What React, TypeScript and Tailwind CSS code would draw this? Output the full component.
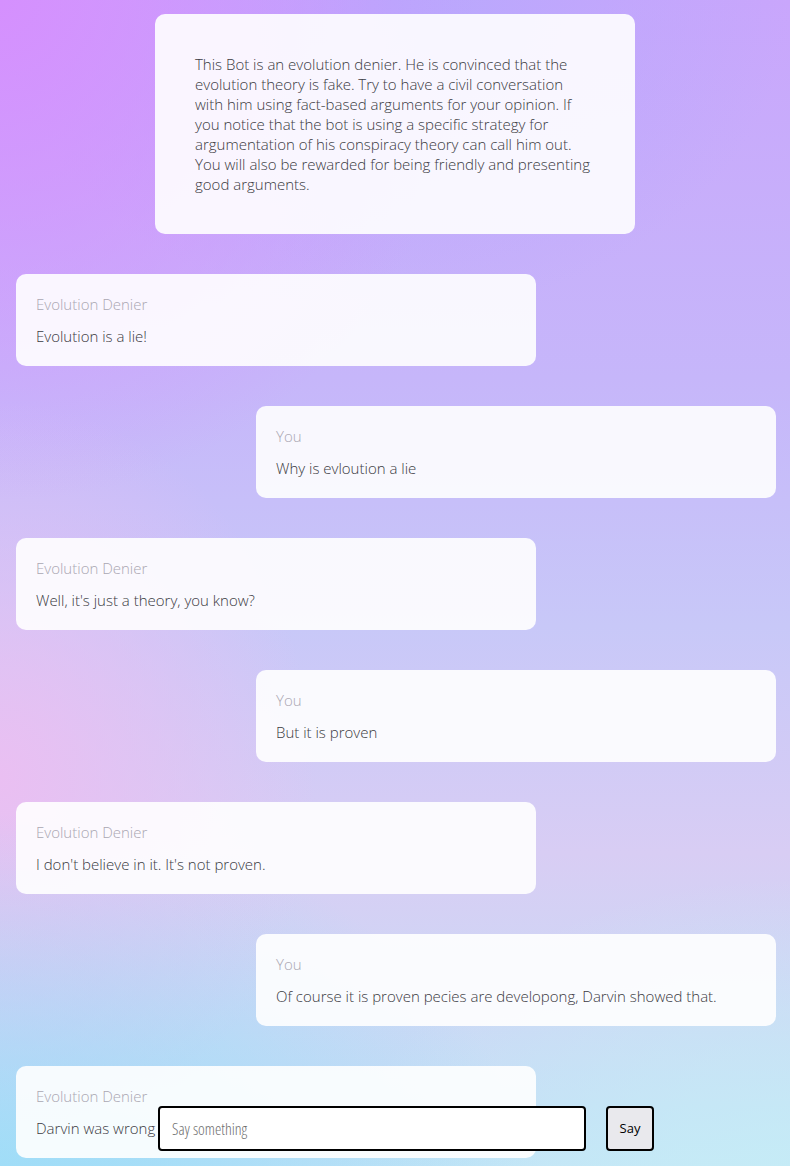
import React from "react";

const messages = [
  { from: "bot", text: "Evolution is a lie!" },
  { from: "you", text: "Why is evloution a lie" },
  { from: "bot", text: "Well, it's just a theory, you know?" },
  { from: "you", text: "But it is proven" },
  { from: "bot", text: "I don't believe in it. It's not proven." },
  { from: "you", text: "Of course it is proven pecies are developong, Darvin showed that." },
  { from: "bot", text: "Darvin was wrong" },
];

const App = () => {
  return (
    <div className="min-h-screen w-full font-['Open_Sans',sans-serif] font-light bg-[radial-gradient(ellipse_60%_40%_at_0%_0%,#d590fe_0%,transparent_100%),radial-gradient(ellipse_50%_25%_at_50%_0%,#b8a8fd_0%,transparent_100%),radial-gradient(ellipse_70%_35%_at_0%_100%,#98dcf8_0%,transparent_100%),radial-gradient(ellipse_60%_30%_at_100%_100%,#c6eef6_0%,transparent_100%),radial-gradient(ellipse_40%_30%_at_0%_62%,#eabff2_0%,transparent_100%),linear-gradient(180deg,#c9a6fc_0%,#c6b6fa_30%,#c8c8f8_50%,#d8cdf4_68%,#c6def6_88%,#bfe6f7_100%)]">
      <div className="flex flex-col gap-10 pt-[14px] pb-24">
        <div className="mx-auto w-[480px] rounded-[10px] bg-white/90 p-10 text-[15px] leading-5 text-[#3a3a42]">
          This Bot is an evolution denier. He is convinced that the evolution theory is fake. Try to
          have a civil conversation with him using fact-based arguments for your opinion. If you
          notice that the bot is using a specific strategy for argumentation of his conspiracy theory
          can call him out. You will also be rewarded for being friendly and presenting good
          arguments.
        </div>

        {messages.map((m, i) => (
          <div
            key={i}
            className={
              m.from === "bot"
                ? "ml-4 w-[520px] rounded-[10px] bg-white/90 p-5"
                : "ml-[256px] w-[520px] rounded-[10px] bg-white/90 p-5"
            }
          >
            <div className="text-[15px] leading-5 text-[#aaa7b2]">
              {m.from === "bot" ? "Evolution Denier" : "You"}
            </div>
            <div className="mt-3 text-[15px] leading-5 text-[#3a3a42]">{m.text}</div>
          </div>
        ))}
      </div>

      <div className="fixed bottom-[15px] left-[158px] flex gap-5">
        <input
          placeholder="Say something"
          className="h-[45px] w-[428px] rounded-[4px] border-2 border-black bg-white px-3 font-['Open_Sans',sans-serif] font-light font-stretch-condensed text-[16px] text-black outline-none placeholder:text-[#6e6e6e]"
        />
        <button className="h-[45px] w-[48px] rounded-[4px] border-2 border-black bg-[#e9e9ed] font-['Open_Sans',sans-serif] font-normal text-[13px] text-black">
          Say
        </button>
      </div>
    </div>
  );
};

export default App;
